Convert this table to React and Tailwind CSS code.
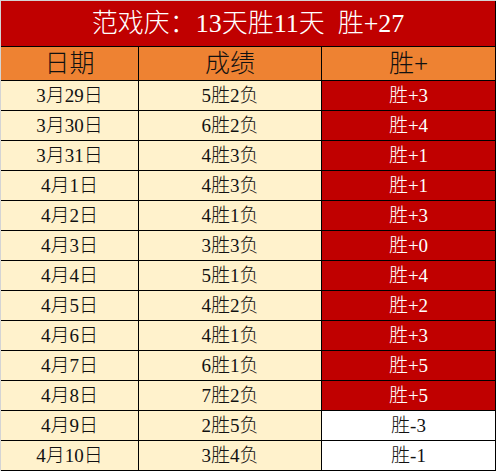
import React from "react";

const rows = [
  ["3月29日", "5胜2负", "胜+3", true],
  ["3月30日", "6胜2负", "胜+4", true],
  ["3月31日", "4胜3负", "胜+1", true],
  ["4月1日", "4胜3负", "胜+1", true],
  ["4月2日", "4胜1负", "胜+3", true],
  ["4月3日", "3胜3负", "胜+0", true],
  ["4月4日", "5胜1负", "胜+4", true],
  ["4月5日", "4胜2负", "胜+2", true],
  ["4月6日", "4胜1负", "胜+3", true],
  ["4月7日", "6胜1负", "胜+5", true],
  ["4月8日", "7胜2负", "胜+5", true],
  ["4月9日", "2胜5负", "胜-3", false],
  ["4月10日", "3胜4负", "胜-1", false],
];

const font = { fontFamily: '"Liberation Serif", "Noto Sans CJK SC", serif' };

export default function App() {
  return (
    <div
      className="w-[496px] h-[471px] bg-white border-l border-t border-[#d4d4d4] text-[#111] font-light"
      style={font}
    >
      {/* Title */}
      <div className="h-[45px] bg-[#c00000] border-r border-black flex items-center justify-center text-white text-[26px] whitespace-pre leading-none">
        范戏庆：13天胜11天  胜+27
      </div>

      {/* Table */}
      <div className="grid grid-cols-[137px_182px_173px] grid-rows-[33px_repeat(13,29px)] gap-px bg-black pt-px pr-px pb-px">
        <div className="bg-[#ee8232] flex items-center justify-center text-[25px] leading-none">日期</div>
        <div className="bg-[#ee8232] flex items-center justify-center text-[25px] leading-none">成绩</div>
        <div className="bg-[#ee8232] flex items-center justify-center text-[25px] leading-none">胜+</div>

        {rows.map(([date, record, diff, win]) => (
          <React.Fragment key={date}>
            <div className="bg-[#fff2cc] flex items-center justify-center text-[19px] leading-none">{date}</div>
            <div className="bg-[#fff2cc] flex items-center justify-center text-[19px] leading-none">{record}</div>
            <div
              className={
                win
                  ? "bg-[#c00000] text-white flex items-center justify-center text-[19px] leading-none"
                  : "bg-white flex items-center justify-center text-[19px] leading-none"
              }
            >
              {diff}
            </div>
          </React.Fragment>
        ))}
      </div>
    </div>
  );
}
